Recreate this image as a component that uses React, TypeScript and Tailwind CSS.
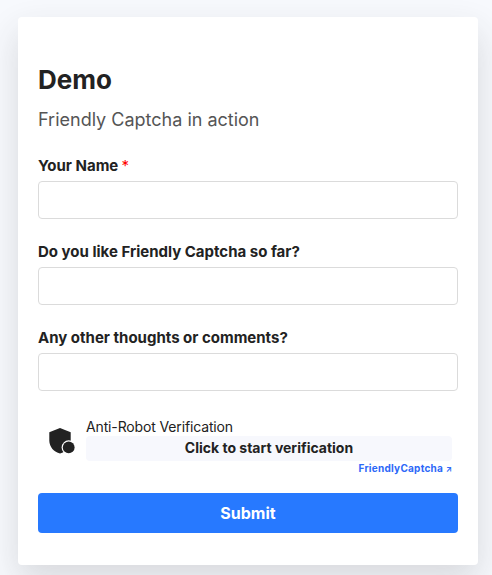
import type { ReactNode } from "react";

function Field({ id, label, required }: { id: string; label: ReactNode; required?: boolean }) {
  return (
    <div className="flex flex-col">
      <label htmlFor={id} className="h-8 pt-px text-[15px] leading-8 font-bold whitespace-nowrap">
        {label}
        {required && <span className="-ml-px font-normal text-[#ff0000]"> *</span>}
      </label>
      <input
        id={id}
        type="text"
        className="h-[38px] w-full rounded-[4px] border border-[#dbdbdb] bg-white px-3 outline-none"
      />
    </div>
  );
}

function ShieldIcon() {
  return (
    <svg width="26" height="26" viewBox="0 0 26 26" className="shrink-0" aria-hidden="true">
      <path d="M11 0 L21.7 4.2 V13 C21.7 19 17 24 11 25.5 C5 24 .3 19 .3 12.5 V4.2 Z" fill="#222" />
      <circle cx="19.7" cy="19.4" r="7.1" fill="#fff" />
      <circle cx="19.7" cy="19.4" r="5.9" fill="#222" />
    </svg>
  );
}

export default function App() {
  return (
    <div className="h-[575px] w-[492px] overflow-hidden bg-[#f7f9fd] pt-[17px] pl-[18px] font-['Inter',sans-serif] text-[#222]">
      <form className="flex h-[548px] w-[460px] flex-col rounded-[4px] bg-white px-5 pt-[45px] shadow-[0_15px_35px_rgba(50,50,50,0.16)]">
        <h1 className="h-[35px] text-[26px] leading-[35px] font-bold">Demo</h1>
        <p className="mt-[6px] h-[34px] text-[18px] leading-[34px] text-[#555]">Friendly Captcha in action</p>
        <div className="mt-[12px] flex flex-col gap-4">
          <Field id="name" label="Your Name" required />
          <Field id="like" label="Do you like Friendly Captcha so far?" />
          <Field id="comments" label="Any other thoughts or comments?" />
        </div>
        <div className="mt-[27px] flex h-[57px] items-start pr-[6px] pl-[11px]">
          <div className="w-[37px] pt-[10px]">
            <ShieldIcon />
          </div>
          <div className="flex flex-1 flex-col">
            <span className="h-[18px] text-[14px] leading-[17px] tracking-[-0.14px]">Anti-Robot Verification</span>
            <button type="button" className="h-[25px] rounded-[4px] bg-[#f7f8fd] pb-[2px] text-[14px] leading-[23px] font-bold">
              Click to start verification
            </button>
            <a className="h-[14px] text-right text-[10px] leading-[14px] font-bold tracking-[0.25px] text-[#2d68f8]">
              FriendlyCaptcha <span className="text-[8px] tracking-normal">↗</span>
            </a>
          </div>
        </div>
        <button type="submit" className="mt-[18px] h-10 w-full rounded-[4px] bg-[#2779ff] pb-px text-[16px] font-bold text-white">
          Submit
        </button>
      </form>
    </div>
  );
}
